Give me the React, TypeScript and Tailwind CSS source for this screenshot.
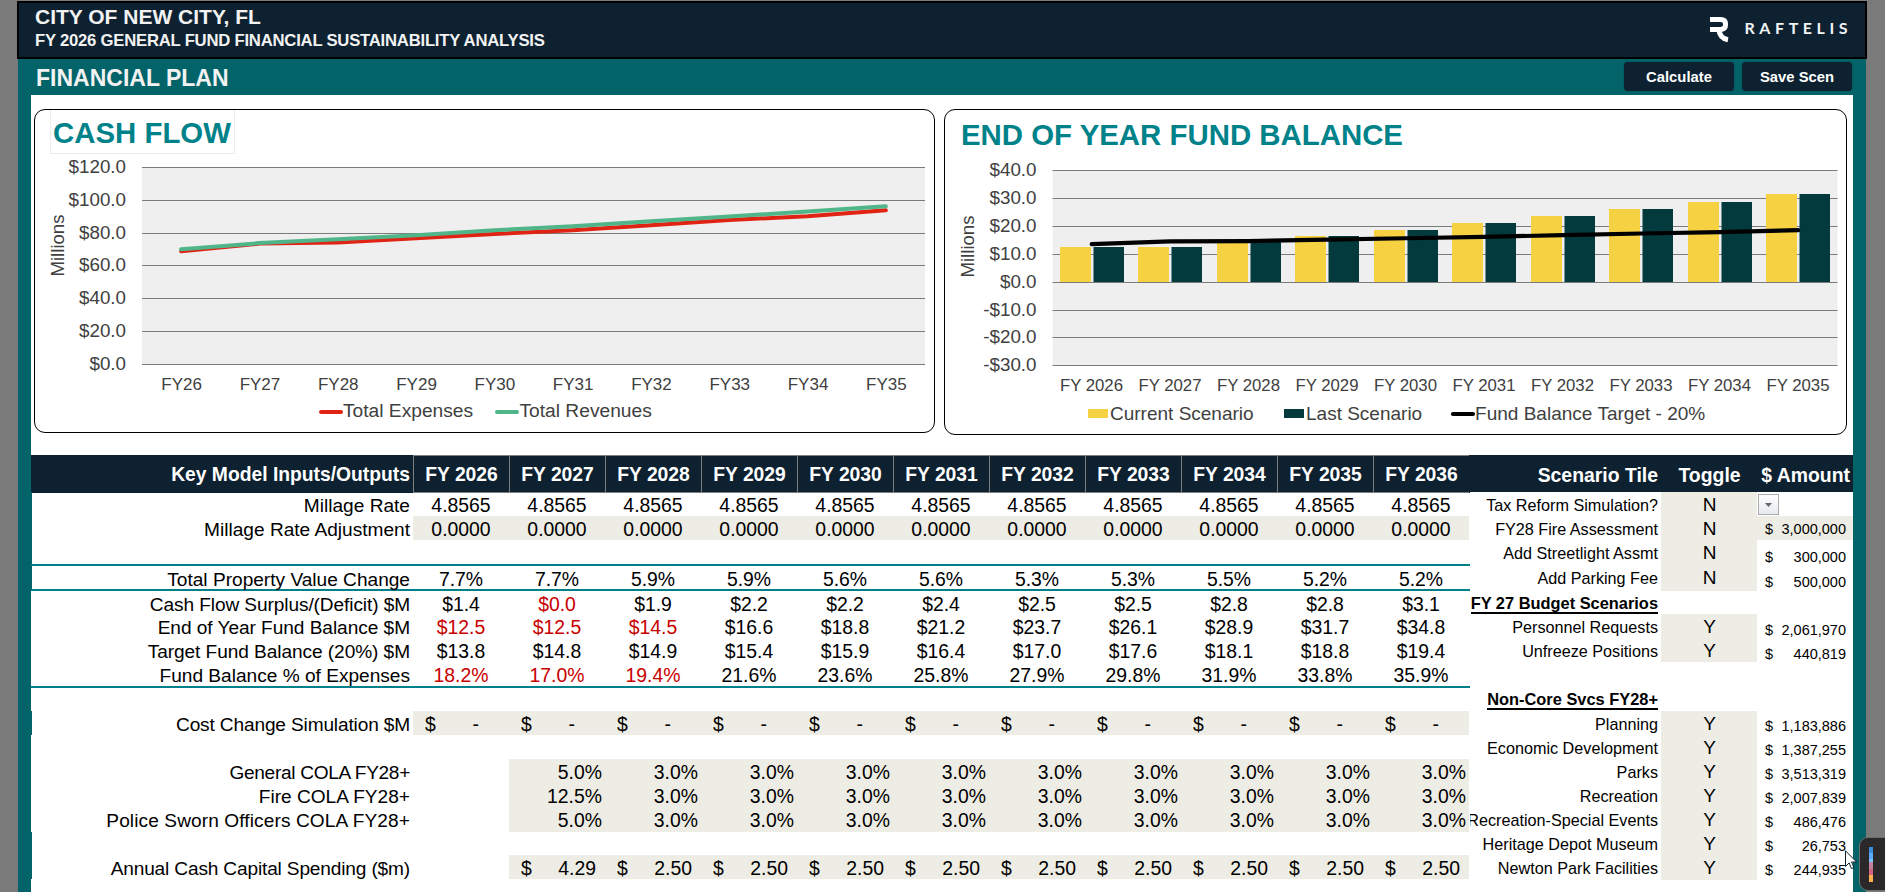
import type { ReactNode } from 'react';
import clsx from 'clsx';

// ---------------------------------------------------------------------------
// Data
// ---------------------------------------------------------------------------

const YEARS = [2026, 2027, 2028, 2029, 2030, 2031, 2032, 2033, 2034, 2035, 2036];

const EXPENSES = [69, 73.7, 74.3, 77, 79.6, 81.8, 84.9, 88, 90.4, 94];
const REVENUES = [70.2, 74, 76.4, 78.8, 81.8, 84.2, 87.3, 90.2, 93.2, 96.4];

const BALANCE = [12.5, 12.5, 14.5, 16.6, 18.8, 21.2, 23.7, 26.1, 28.9, 31.7];
const TARGET = [13.8, 14.8, 14.9, 15.4, 15.9, 16.4, 17.0, 17.6, 18.1, 18.8];

type CellKind = 'center' | 'right' | 'money';

interface InputRow {
  label?: string;
  labelClass?: string;
  height: string;
  kind?: CellKind;
  values?: string[];
  red?: number; // how many leading values are shown in red, -1 for only the second
  skip?: number; // how many leading year cells stay empty
  shaded?: boolean;
  line?: boolean; // teal rule on the bottom edge
  inset?: boolean; // frame is one pixel wider on the left
}

const fill = (value: string, count: number) => Array.from({ length: count }, () => value);

const INPUT_ROWS: InputRow[] = [
  { label: 'Millage Rate', height: 'h-[24px]', kind: 'center', values: fill('4.8565', 11), inset: true },
  { label: 'Millage Rate Adjustment', height: 'h-[24px]', kind: 'center', values: fill('0.0000', 11), shaded: true, inset: true },
  { height: 'h-[26px]', line: true, inset: true },
  {
    label: 'Total Property Value Change',
    height: 'h-[25px]',
    kind: 'center',
    values: ['7.7%', '7.7%', '5.9%', '5.9%', '5.6%', '5.6%', '5.3%', '5.3%', '5.5%', '5.2%', '5.2%'],
    line: true,
    inset: true,
  },
  {
    label: 'Cash Flow Surplus/(Deficit) $M',
    labelClass: 'tracking-[-0.1px]',
    height: 'h-[23px]',
    kind: 'center',
    values: ['$1.4', '$0.0', '$1.9', '$2.2', '$2.2', '$2.4', '$2.5', '$2.5', '$2.8', '$2.8', '$3.1'],
    red: -1,
  },
  {
    label: 'End of Year Fund Balance $M',
    labelClass: 'tracking-[-0.05px]',
    height: 'h-[24px]',
    kind: 'center',
    values: ['$12.5', '$12.5', '$14.5', '$16.6', '$18.8', '$21.2', '$23.7', '$26.1', '$28.9', '$31.7', '$34.8'],
    red: 3,
  },
  {
    label: 'Target Fund Balance (20%) $M',
    labelClass: 'tracking-[-0.07px]',
    height: 'h-[24px]',
    kind: 'center',
    values: ['$13.8', '$14.8', '$14.9', '$15.4', '$15.9', '$16.4', '$17.0', '$17.6', '$18.1', '$18.8', '$19.4'],
  },
  {
    label: 'Fund Balance % of Expenses',
    height: 'h-[26px]',
    kind: 'center',
    values: ['18.2%', '17.0%', '19.4%', '21.6%', '23.6%', '25.8%', '27.9%', '29.8%', '31.9%', '33.8%', '35.9%'],
    red: 3,
    line: true,
  },
  { height: 'h-[23px]' },
  {
    label: 'Cost Change Simulation $M',
    labelClass: 'tracking-[-0.15px]',
    height: 'h-[24px]',
    kind: 'money',
    values: fill('-', 11),
    shaded: true,
    inset: true,
  },
  { height: 'h-[24px]' },
  {
    label: 'General COLA FY28+',
    labelClass: 'tracking-[-0.32px]',
    height: 'h-[24px]',
    kind: 'right',
    values: ['5.0%', ...fill('3.0%', 9)],
    skip: 1,
    shaded: true,
  },
  { label: 'Fire COLA FY28+', height: 'h-[24px]', kind: 'right', values: ['12.5%', ...fill('3.0%', 9)], skip: 1, shaded: true },
  {
    label: 'Police Sworn Officers COLA FY28+',
    labelClass: 'tracking-[0.1px]',
    height: 'h-[25px]',
    kind: 'right',
    values: ['5.0%', ...fill('3.0%', 9)],
    skip: 1,
    shaded: true,
  },
  { height: 'h-[23px]', inset: true },
  {
    label: 'Annual Cash Capital Spending ($m)',
    labelClass: 'tracking-[-0.16px]',
    height: 'h-[24px]',
    kind: 'money',
    values: ['4.29', ...fill('2.50', 9)],
    skip: 1,
    shaded: true,
    inset: true,
  },
];

interface ScenarioRow {
  label?: string;
  heading?: boolean;
  height: string;
  toggle?: string;
  amount?: string;
  amountLine?: string;
  shadedAmount?: boolean;
  dropdown?: boolean;
}

const SCENARIO_ROWS: ScenarioRow[] = [
  { label: 'Tax Reform Simulation?', height: 'h-[24px]', toggle: 'N', dropdown: true },
  { label: 'FY28 Fire Assessment', height: 'h-[24px]', toggle: 'N', amount: '3,000,000', amountLine: 'leading-[26px]', shadedAmount: true },
  { label: 'Add Streetlight Assmt', height: 'h-[25px]', toggle: 'N', amount: '300,000', amountLine: 'leading-[34px]' },
  { label: 'Add Parking Fee', height: 'h-[26px]', toggle: 'N', amount: '500,000', amountLine: 'leading-[34px]' },
  { label: 'FY 27 Budget Scenarios', heading: true, height: 'h-[23px]' },
  { label: 'Personnel Requests', height: 'h-[24px]', toggle: 'Y', amount: '2,061,970', amountLine: 'leading-[32px]' },
  { label: 'Unfreeze Positions', height: 'h-[24px]', toggle: 'Y', amount: '440,819', amountLine: 'leading-[32px]' },
  { height: 'h-[25px]' },
  { label: 'Non-Core Svcs FY28+', heading: true, height: 'h-[24px]' },
  { label: 'Planning', height: 'h-[24px]', toggle: 'Y', amount: '1,183,886', amountLine: 'leading-[31px]' },
  { label: 'Economic Development', height: 'h-[24px]', toggle: 'Y', amount: '1,387,255', amountLine: 'leading-[31px]' },
  { label: 'Parks', height: 'h-[24px]', toggle: 'Y', amount: '3,513,319', amountLine: 'leading-[31px]' },
  { label: 'Recreation', height: 'h-[24px]', toggle: 'Y', amount: '2,007,839', amountLine: 'leading-[31px]' },
  { label: 'Recreation-Special Events', height: 'h-[24px]', toggle: 'Y', amount: '486,476', amountLine: 'leading-[31px]' },
  { label: 'Heritage Depot Museum', height: 'h-[24px]', toggle: 'Y', amount: '26,753', amountLine: 'leading-[31px]' },
  { label: 'Newton Park Facilities', height: 'h-[25px]', toggle: 'Y', amount: '244,935', amountLine: 'leading-[31px]' },
];

// ---------------------------------------------------------------------------
// Header
// ---------------------------------------------------------------------------

function RaftelisLogo() {
  return (
    <svg width="140" height="30" viewBox="0 0 140 30" className="shrink-0">
      <g fill="none" stroke="#ffffff" strokeWidth="5">
        <path d="M0 4.6H10.5Q15.6 4.6 15.6 9.2Q15.6 14.4 10.2 14.4H0" />
        <path d="M8.6 13.5Q9.6 23.4 18 24.8" />
      </g>
      <text
        x="34.5"
        y="18.6"
        fill="#f1f3f4"
        fontFamily="Lato, sans-serif"
        fontWeight="700"
        fontSize="16"
        textLength="103"
        lengthAdjust="spacing"
      >
        RAFTELIS
      </text>
    </svg>
  );
}

function HeaderButton({ children }: { children: ReactNode }) {
  return (
    <button className="h-[29px] w-[110px] rounded-[4px] bg-[#0d2131] text-[14.8px] leading-[30px] font-bold text-white shadow-[0_0_2px_rgba(0,0,0,0.35)]">
      {children}
    </button>
  );
}

// ---------------------------------------------------------------------------
// Charts
// ---------------------------------------------------------------------------

interface AxisProps {
  labels: string[];
  left: number;
  right: number;
  top: number;
  step: number;
}

function Axis({ labels, left, right, top, step }: AxisProps) {
  const bottom = top + step * (labels.length - 1);
  return (
    <g>
      <rect x={left} y={top} width={right - left} height={bottom - top} fill="#efefef" />
      {labels.map((label, i) => {
        const y = Math.floor(top + i * step) + 0.5;
        return (
          <g key={label}>
            <line x1={left} x2={right} y1={y} y2={y} stroke="#7b7b7b" />
            <text x={left - 16} y={y + 5.8} textAnchor="end" fontSize="18.8" fill="#404040">
              {label}
            </text>
          </g>
        );
      })}
    </g>
  );
}

function CashFlowChart() {
  const left = 107;
  const right = 890;
  const slot = (right - left) / 10;
  const x = (i: number) => left + slot * (i + 0.5);
  const points = (data: number[]) => data.map((v, i) => `${x(i)},${210.7 - v * 1.643}`).join(' ');

  return (
    <svg width="899" height="278" viewBox="0 0 899 278" className="block">
      <Axis
        labels={['$120.0', '$100.0', '$80.0', '$60.0', '$40.0', '$20.0', '$0.0']}
        left={left}
        right={right}
        top={13.3}
        step={32.88}
      />
      <g fill="none" strokeWidth="4" strokeLinejoin="round" strokeLinecap="round">
        <polyline points={points(EXPENSES)} stroke="#e12314" />
        <polyline points={points(REVENUES)} stroke="#50b588" />
        <path d="M286 258H306" stroke="#e12314" />
        <path d="M462 258H482" stroke="#50b588" />
      </g>
      <g fill="#404040">
        {YEARS.slice(0, 10).map((year, i) => (
          <text key={year} x={x(i) + 0.5} y="236" textAnchor="middle" fontSize="17">
            {`FY${year % 100}`}
          </text>
        ))}
        <text x="308" y="263.4" fontSize="19.2">Total Expenses</text>
        <text x="484.5" y="263.4" fontSize="19.2">Total Revenues</text>
        <text transform="translate(28.5 122.5) rotate(-90)" fontSize="18.6">Millions</text>
      </g>
    </svg>
  );
}

function FundBalanceChart() {
  const left = 107.5;
  const right = 892.5;
  const zero = 128.6;
  const unit = 2.79;
  const slot = (right - left) / 10;
  const x = (i: number) => left + slot * (i + 0.5);
  const barTop = (v: number) => Math.floor(zero + 0.05 - v * unit);

  return (
    <svg width="901" height="280" viewBox="0 0 901 280" className="block">
      <Axis
        labels={['$40.0', '$30.0', '$20.0', '$10.0', '$0.0', '-$10.0', '-$20.0', '-$30.0']}
        left={left}
        right={right}
        top={16.75}
        step={27.86}
      />
      {BALANCE.map((v, i) => {
        const start = Math.round(115 + i * 78.44);
        return (
          <g key={i}>
            <rect x={start} y={barTop(v)} width="31" height={128 - barTop(v)} fill="#f6d142" />
            <rect x={start + 33.5} y={barTop(v)} width="30.5" height={128 - barTop(v)} fill="#023a3e" />
          </g>
        );
      })}
      <g fill="none" stroke="#000000" strokeWidth="4.2" strokeLinejoin="round" strokeLinecap="round">
        <polyline points={TARGET.map((v, i) => `${x(i)},${zero - v * unit}`).join(' ')} />
        <path d="M508 260H528" />
      </g>
      <rect x="143" y="255" width="20" height="9" fill="#f6d142" />
      <rect x="339" y="255" width="20" height="9" fill="#023a3e" />
      <g fill="#404040">
        {YEARS.slice(0, 10).map((year, i) => (
          <text key={year} x={x(i) - 0.3} y="237" textAnchor="middle" fontSize="16.8">
            {`FY ${year}`}
          </text>
        ))}
        <text x="165" y="265.6" fontSize="19">Current Scenario</text>
        <text x="361" y="265.6" fontSize="19">Last Scenario</text>
        <text x="530" y="265.6" fontSize="19.05">Fund Balance Target - 20%</text>
        <text transform="translate(28.5 123.5) rotate(-90)" fontSize="18.6">Millions</text>
      </g>
    </svg>
  );
}

// ---------------------------------------------------------------------------
// Tables
// ---------------------------------------------------------------------------

function isRed(row: InputRow, i: number) {
  if (!row.red) return false;
  return row.red === -1 ? i === 1 : i < row.red;
}

function InputTable() {
  return (
    <div className="w-[1439px] shrink-0">
      <div className="flex h-[38px] bg-[#0d2131] text-[19.3px] leading-[40px] font-bold text-white">
        <div className="w-[382px] pr-[3px] text-right">Key Model Inputs/Outputs</div>
        {YEARS.map((year) => (
          <div key={year} className="w-[96px] border-y border-l border-[#808080] text-center leading-[38px]">
            FY {year}
          </div>
        ))}
      </div>

      {INPUT_ROWS.map((row, r) => (
        <div
          key={r}
          className={clsx(
            'flex text-[19.1px] leading-[27px] whitespace-nowrap text-black',
            row.height,
            row.line && 'border-b-2 border-[#00808a]',
            r === 0 && '-mt-px',
          )}
        >
          <div
            className={clsx(
              'w-[382px] border-l pr-[3px] text-right',
              row.inset ? 'border-[#026469]' : 'border-white',
              row.labelClass,
            )}
          >
            {row.label}
          </div>
          {Array.from({ length: row.values ? (row.skip ?? 0) : 0 }, (_, i) => (
            <div key={`empty-${i}`} className="w-[96px]" />
          ))}
          {row.values?.map((value, i) => (
            <div
              key={i}
              className={clsx(
                'w-[96px] text-[19.4px]',
                row.shaded && 'bg-[#eeede5]',
                row.kind === 'center' && 'text-center',
                row.kind === 'right' && 'pr-[3px] text-right',
                row.kind === 'money' && 'flex justify-between pl-[12px]',
                row.kind === 'money' && (value === '-' ? 'pr-[30px]' : 'pr-[9px]'),
                isRed(row, i) && 'text-[#c80000]',
              )}
            >
              {row.kind === 'money' && <span>$</span>}
              <span>{value}</span>
            </div>
          ))}
        </div>
      ))}
    </div>
  );
}

function DropdownButton() {
  return (
    <div className="mt-[2px] ml-px flex h-[21px] w-[21px] items-center justify-center border border-[#ababab] bg-linear-to-b from-white to-[#e6eaf0]">
      <svg width="7" height="4" viewBox="0 0 7 4">
        <path d="M0 0H7L3.5 4Z" fill="#666666" />
      </svg>
    </div>
  );
}

function ScenarioTable() {
  return (
    <div className="w-[383px] shrink-0">
      <div className="flex h-[37px] bg-[#0d2131] text-[19.4px] leading-[40px] font-bold whitespace-nowrap text-white">
        <div className="w-[191px] pr-[3px] text-right">Scenario Tile</div>
        <div className="w-[96px] pl-px text-center">Toggle</div>
        <div className="w-[96px] pr-[3px] text-right">$ Amount</div>
      </div>

      {SCENARIO_ROWS.map((row, r) => (
        <div key={r} className={clsx('flex whitespace-nowrap text-black', row.height)}>
          <div className="flex w-[191px] justify-end overflow-hidden pr-[3px] text-[16.2px] leading-[27px]">
            {row.heading ? (
              <span className="h-[23px] shrink-0 border-b-2 border-black text-[16.4px] leading-[25px] font-bold">{row.label}</span>
            ) : (
              <span className="shrink-0">{row.label}</span>
            )}
          </div>
          <div className={clsx('w-[96px] pl-px text-center text-[19px] leading-[26px]', row.toggle && 'bg-[#eeede5]')}>
            {row.toggle}
          </div>
          <div className={clsx('w-[96px] text-[14.5px]', row.shadedAmount && 'bg-[#eeede5]')}>
            {row.dropdown && <DropdownButton />}
            {row.amount && (
              <div className={clsx('flex justify-between pr-[7px] pl-[8px]', row.amountLine)}>
                <span>$</span>
                <span>{row.amount}</span>
              </div>
            )}
          </div>
        </div>
      ))}
    </div>
  );
}

// ---------------------------------------------------------------------------
// Page
// ---------------------------------------------------------------------------

export default function App() {
  return (
    <div className="relative h-[892px] w-[1885px] overflow-hidden bg-[#7a7a7a] pt-px pl-[17px] font-['Liberation_Sans',Arial,sans-serif]">
      <header className="flex h-[58px] w-[1850px] justify-between border-2 border-black bg-[#0d2131] pr-[15px] pl-[16px] text-[#f2f2f2]">
        <div className="font-bold whitespace-nowrap">
          <h1 className="mt-[2px] text-[21px] leading-[24px]">CITY OF NEW CITY, FL</h1>
          <p className="mt-px text-[16.7px] leading-[21px] tracking-[-0.23px]">FY 2026 GENERAL FUND FINANCIAL SUSTAINABILITY ANALYSIS</p>
        </div>
        <div className="pt-[12px]">
          <RaftelisLogo />
        </div>
      </header>

      <div className="ml-px flex h-[833px] w-[1848px] flex-col bg-[#026469] px-[13px]">
        <div className="flex h-[36px] shrink-0 justify-between pt-[3px] pr-px pl-[5px]">
          <h2 className="text-[23px] leading-[32px] font-bold text-[#f2f2f2]">FINANCIAL PLAN</h2>
          <div className="flex gap-[8px]">
            <HeaderButton>Calculate</HeaderButton>
            <HeaderButton>Save Scen</HeaderButton>
          </div>
        </div>

        <main className="w-[1822px] flex-1 bg-white pt-[14px]">
          <div className="flex h-[346px] items-start gap-[9px] pl-[3px]">
            <section className="h-[324px] w-[901px] rounded-[11px] border border-black">
              <h3 className="ml-[15px] h-[44px] w-[185px] border-x border-b border-[#ececec] pl-[2px] text-[29.4px] leading-[46px] font-bold whitespace-nowrap text-[#00828a]">
                CASH FLOW
              </h3>
              <CashFlowChart />
            </section>
            <section className="h-[326px] w-[903px] rounded-[11px] border border-black">
              <h3 className="h-[44px] pl-[16px] text-[29.4px] leading-[50px] font-bold whitespace-nowrap text-[#00828a]">
                END OF YEAR FUND BALANCE
              </h3>
              <FundBalanceChart />
            </section>
          </div>

          <div className="flex items-start">
            <InputTable />
            <ScenarioTable />
          </div>
        </main>
      </div>

      {/* Side widget docked to the window edge */}
      <div className="absolute top-[837px] left-[1859px] h-[54px] w-[40px] rounded-[9px] border border-[#6e6c6d] bg-[#2a2829] pt-[9px] pl-[9px]">
        <div className="flex h-[35px] w-[4px] flex-col">
          <div className="h-[6px] bg-[#3a8ddb]" />
          <div className="h-[6px] bg-[#5aaaf5]" />
          <div className="h-[3px] bg-[#7cc6ff]" />
          <div className="h-[7px] bg-[#c0809f]" />
          <div className="h-[6px] bg-[#d0647c]" />
          <div className="h-[7px] bg-[#ffb050]" />
        </div>
      </div>

      {/* Mouse pointer */}
      <svg width="13" height="20" viewBox="0 0 13 20" className="absolute top-[850px] left-[1845px]">
        <path d="M0.5 0.8V16.4L4.1 12.9L6.5 18.6L9 17.5L6.6 12H11.6Z" fill="#ffffff" stroke="#0b1f2c" />
      </svg>
    </div>
  );
}
